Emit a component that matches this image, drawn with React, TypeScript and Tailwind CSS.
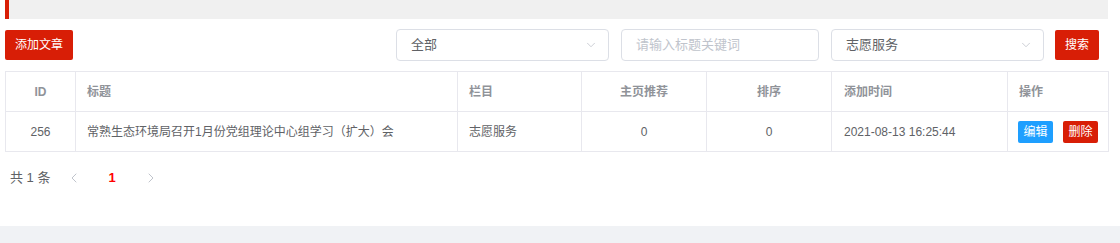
import { ChevronDown, ChevronLeft, ChevronRight } from "lucide-react";

const rows = [
  {
    id: 256,
    title: "常熟生态环境局召开1月份党组理论中心组学习（扩大）会",
    column: "志愿服务",
    home: 0,
    sort: 0,
    time: "2021-08-13 16:25:44",
  },
];

function Select({ value }: { value: string }) {
  return (
    <div className="flex h-[32px] w-[213px] items-center justify-between rounded-[4px] border border-[#dcdfe6] bg-white pl-[14px] pr-[10px] text-[13px] text-[#606266]">
      <span>{value}</span>
      <ChevronDown size={14} strokeWidth={1.4} className="text-[#c0c4cc]" />
    </div>
  );
}

export default function App() {
  return (
    <div
      className="flex h-[243px] w-[1120px] flex-col overflow-hidden bg-white"
      style={{ fontFamily: '"Liberation Sans", "Noto Sans CJK SC", sans-serif' }}
    >
      <div className="px-[5px]">
        <div className="h-[19px] w-[1103px] border-l-4 border-[#d81e06] bg-[#f0f0f0]" />
      </div>

      <div className="mt-[10px] flex h-[32px] items-center pl-[5px] pr-[21px]">
        <button className="h-[30px] w-[68px] rounded-[2px] bg-[#d81e06] text-[12px] text-white">
          添加文章
        </button>
        <div className="ml-auto flex items-center">
          <Select value="全部" />
          <div className="ml-[12px] flex h-[32px] w-[198px] items-center rounded-[4px] border border-[#dcdfe6] px-[14px] text-[13px] text-[#c0c4cc]">
            请输入标题关键词
          </div>
          <div className="ml-[12px]">
            <Select value="志愿服务" />
          </div>
          <button className="ml-[11px] h-[30px] w-[44px] rounded-[2px] bg-[#d81e06] text-[12px] text-white">
            搜索
          </button>
        </div>
      </div>

      <div className="mt-[10px] px-[5px]">
        <table className="w-[1103px] table-fixed border-collapse text-[12px]">
          <colgroup>
            <col className="w-[70px]" />
            <col className="w-[382px]" />
            <col className="w-[124px]" />
            <col className="w-[125px]" />
            <col className="w-[125px]" />
            <col className="w-[176px]" />
            <col className="w-[101px]" />
          </colgroup>
          <thead>
            <tr className="h-[40px] font-bold text-[#909399]">
              <th className="border border-[#e8e8ee] text-center">ID</th>
              <th className="border border-[#e8e8ee] px-[11px] text-left">标题</th>
              <th className="border border-[#e8e8ee] px-[11px] text-left">栏目</th>
              <th className="border border-[#e8e8ee] text-center">主页推荐</th>
              <th className="border border-[#e8e8ee] text-center">排序</th>
              <th className="border border-[#e8e8ee] px-[12px] text-left">添加时间</th>
              <th className="border border-[#e8e8ee] px-[11px] text-left">操作</th>
            </tr>
          </thead>
          <tbody>
            {rows.map((r) => (
              <tr key={r.id} className="h-[40px] text-[#606266]">
                <td className="border border-[#e8e8ee] text-center">{r.id}</td>
                <td className="border border-[#e8e8ee] px-[11px]">{r.title}</td>
                <td className="border border-[#e8e8ee] px-[11px]">{r.column}</td>
                <td className="border border-[#e8e8ee] text-center">{r.home}</td>
                <td className="border border-[#e8e8ee] text-center">{r.sort}</td>
                <td className="border border-[#e8e8ee] px-[12px]">{r.time}</td>
                <td className="border border-[#e8e8ee] px-[10px]">
                  <div className="flex gap-[10px]">
                    <button className="h-[22px] w-[36px] rounded-[2px] bg-[#1e9fff] text-[12px] text-white">
                      编辑
                    </button>
                    <button className="h-[22px] w-[36px] rounded-[2px] bg-[#d81e06] text-[12px] text-white">
                      删除
                    </button>
                  </div>
                </td>
              </tr>
            ))}
          </tbody>
        </table>
      </div>

      <div className="mt-[13px] flex h-[26px] items-center pl-[10px] text-[13px] text-[#606266]">
        <span>共 1 条</span>
        <ChevronLeft size={16} strokeWidth={1.5} className="ml-[16px] text-[#c0c4cc]" />
        <span className="ml-[26px] font-bold text-[#ff0000]">1</span>
        <ChevronRight size={16} strokeWidth={1.5} className="ml-[27px] text-[#c0c4cc]" />
      </div>

      <div className="mt-auto h-[17px] bg-[#f0f2f5]" />
    </div>
  );
}
